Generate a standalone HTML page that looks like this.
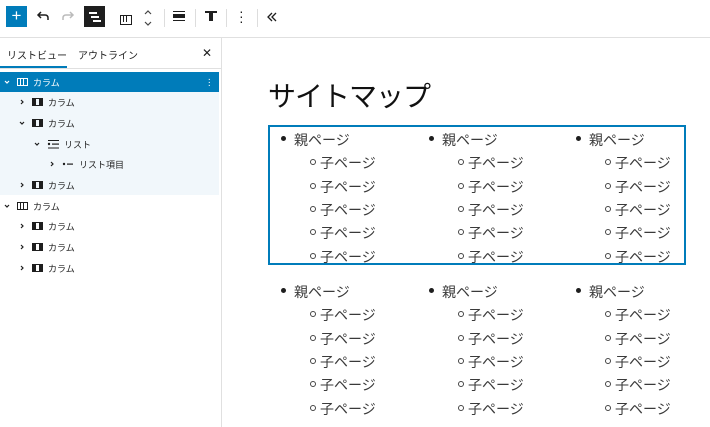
<!DOCTYPE html>
<html><head><meta charset="utf-8"><style>
*{margin:0;padding:0;box-sizing:border-box}
body{width:710px;height:427px;overflow:hidden;background:#fff;font-family:"Liberation Sans","Noto Sans CJK JP",sans-serif;color:#1e1e1e;position:relative}
.a{position:absolute}
.tb{left:0;top:0;width:710px;height:38px;border-bottom:1px solid #e0e0e0}
.side{left:0;top:38px;width:222px;height:389px;border-right:1px solid #e0e0e0}
.tab{font-size:10px;top:47px}
.row{left:0;width:219px;height:20px;font-size:9px;display:flex;align-items:center}
.chev{width:10px;display:inline-block;text-align:center;line-height:0}
.ci{display:inline-block;width:11px;height:8px;border:1.5px solid #1e1e1e;margin:0 5px;position:relative}
.ci.f{border-left-width:4px;border-right-width:4px}
.ci.e::after{content:"";position:absolute;left:2px;top:-1px;width:2px;height:7px;border-left:1px solid currentColor;border-right:1px solid currentColor}
.li{font-size:14px;color:#3a3a3a;white-space:nowrap}
.b{width:5px;height:5px;border-radius:50%;background:#1e1e1e}
.o{width:6px;height:6px;border-radius:50%;border:1px solid #444}
</style></head><body>
<div class="a tb"></div>
<div class="a" style="left:6px;top:6px;width:21px;height:21px;background:#007cba;color:#fff;font-size:17px;line-height:20px;text-align:center">+</div>
<svg class="a" style="left:36px;top:10px" width="14" height="12"><path d="M5 2 L2 5 L5 8 M2 5 H9 Q12 5 12 8 V10" fill="none" stroke="#1e1e1e" stroke-width="1.5"/></svg>
<svg class="a" style="left:61px;top:10px" width="14" height="12"><path d="M9 2 L12 5 L9 8 M12 5 H5 Q2 5 2 8 V10" fill="none" stroke="#bbb" stroke-width="1.5"/></svg>
<div class="a" style="left:84px;top:6px;width:21px;height:21px;background:#1e1e1e">
<div class="a" style="left:5px;top:6px;width:8px;height:1.5px;background:#fff"></div>
<div class="a" style="left:7px;top:10px;width:8px;height:1.5px;background:#fff"></div>
<div class="a" style="left:9px;top:14px;width:8px;height:1.5px;background:#fff"></div></div>
<div class="a ci e" style="left:120px;top:12px;width:12px;height:10px;margin:0"></div>
<svg class="a" style="left:143px;top:8px" width="10" height="20"><path d="M2 6 L5 3 L8 6 M2 14 L5 17 L8 14" fill="none" stroke="#444" stroke-width="1.2"/></svg>
<div class="a" style="left:164px;top:9px;width:1px;height:18px;background:#ddd"></div>
<div class="a" style="left:173px;top:11px;width:12px;height:10px;border-top:1.5px solid #1e1e1e;border-bottom:1.5px solid #1e1e1e"><div class="a" style="left:0;top:2px;width:12px;height:4px;background:#1e1e1e"></div></div>
<div class="a" style="left:195px;top:9px;width:1px;height:18px;background:#ddd"></div>
<div class="a" style="left:205px;top:11px;width:12px;height:2px;background:#1e1e1e"></div>
<div class="a" style="left:209px;top:13px;width:4px;height:8px;background:#1e1e1e"></div>
<div class="a" style="left:226px;top:9px;width:1px;height:18px;background:#ddd"></div>
<div class="a" style="left:239px;top:9px;font-size:14px;line-height:5px;">·<br>·<br>·</div>
<div class="a" style="left:257px;top:9px;width:1px;height:18px;background:#ddd"></div>
<svg class="a" style="left:266px;top:11px" width="12" height="12"><path d="M6 2 L2 6 L6 10 M10 2 L6 6 L10 10" fill="none" stroke="#1e1e1e" stroke-width="1.3"/></svg>

<div class="a side"></div>
<div class="a tab" style="left:7px">リストビュー</div>
<div class="a tab" style="left:78px">アウトライン</div>
<div class="a" style="left:202px;top:46px;font-size:12px">✕</div>
<div class="a" style="left:0;top:66px;width:67px;height:2px;background:#007cba"></div>
<div class="a" style="left:0;top:68px;width:222px;height:1px;background:#e0e0e0"></div>
<div class="a" style="left:0;top:92px;width:219px;height:103px;background:#f1f7fb"></div>

<div class="a row" style="top:72px;background:#007cba;color:#fff"><span class="chev" style="margin-left:2px"><svg width="6" height="4"><path d="M1 1 L3 3 L5 1" fill="none" stroke="#fff" stroke-width="1.2"/></svg></span><span class="ci e" style="border-color:#fff;color:#fff"></span>カラム<span style="margin-left:auto;margin-right:8px;font-size:10px;line-height:3px">·<br>·<br>·</span></div>
<div id="rows"></div>

<div class="a" style="left:268px;top:75px;font-size:28px;color:#111;letter-spacing:-1px">サイトマップ</div>
<div class="a" style="left:268px;top:125px;width:418px;height:140px;border:2px solid #007cba"></div>

<div id="lists"></div>
<script>
const down='<svg width="6" height="4"><path d="M1 1 L3 3 L5 1" fill="none" stroke="#1e1e1e" stroke-width="1.2"/></svg>';
const right='<svg width="4" height="6"><path d="M1 1 L3 3 L1 5" fill="none" stroke="#1e1e1e" stroke-width="1.2"/></svg>';
const rows=[[92,17,right,'<span class="ci f"></span>','カラム'],[113,17,down,'<span class="ci f"></span>','カラム'],
[134,32,down,'<svg width="12" height="10" style="margin:0 5px"><rect x="1" y="1" width="11" height="1" fill="#1e1e1e"/><circle cx="2" cy="5" r="1.2" fill="#1e1e1e"/><rect x="5" y="4.5" width="7" height="1.2" fill="#1e1e1e"/><rect x="1" y="8.5" width="11" height="1" fill="#1e1e1e"/></svg>','リスト'],
[154,47,right,'<svg width="12" height="6" style="margin:0 5px"><circle cx="2" cy="3" r="1.2" fill="#1e1e1e"/><rect x="5" y="2.5" width="6" height="1.2" fill="#1e1e1e"/></svg>','リスト項目'],
[175,17,right,'<span class="ci f"></span>','カラム'],[196,2,down,'<span class="ci e"></span>','カラム'],
[216,17,right,'<span class="ci f"></span>','カラム'],[237,17,right,'<span class="ci f"></span>','カラム'],[258,17,right,'<span class="ci f"></span>','カラム']];
let r='';rows.forEach(a=>{r+=`<div class="a row" style="top:${a[0]}px"><span class="chev" style="margin-left:${a[1]}px">${a[2]}</span>${a[3]}${a[4]}</div>`});
document.getElementById('rows').innerHTML=r;
let h='';
[139,291].forEach(y0=>{[0,148,295].forEach(dx=>{
 const x=283+dx;
 h+=`<div class="a b" style="left:${x-2}px;top:${y0-3}px"></div><div class="a li" style="left:${x+11}px;top:${y0-9}px">親ページ</div>`;
 for(let i=1;i<=5;i++){const y=y0+i*23.3;
 h+=`<div class="a o" style="left:${x+27}px;top:${y-3}px"></div><div class="a li" style="left:${x+37}px;top:${y-9}px">子ページ</div>`;}
});});
document.getElementById('lists').innerHTML=h;
</script>
</body></html>
